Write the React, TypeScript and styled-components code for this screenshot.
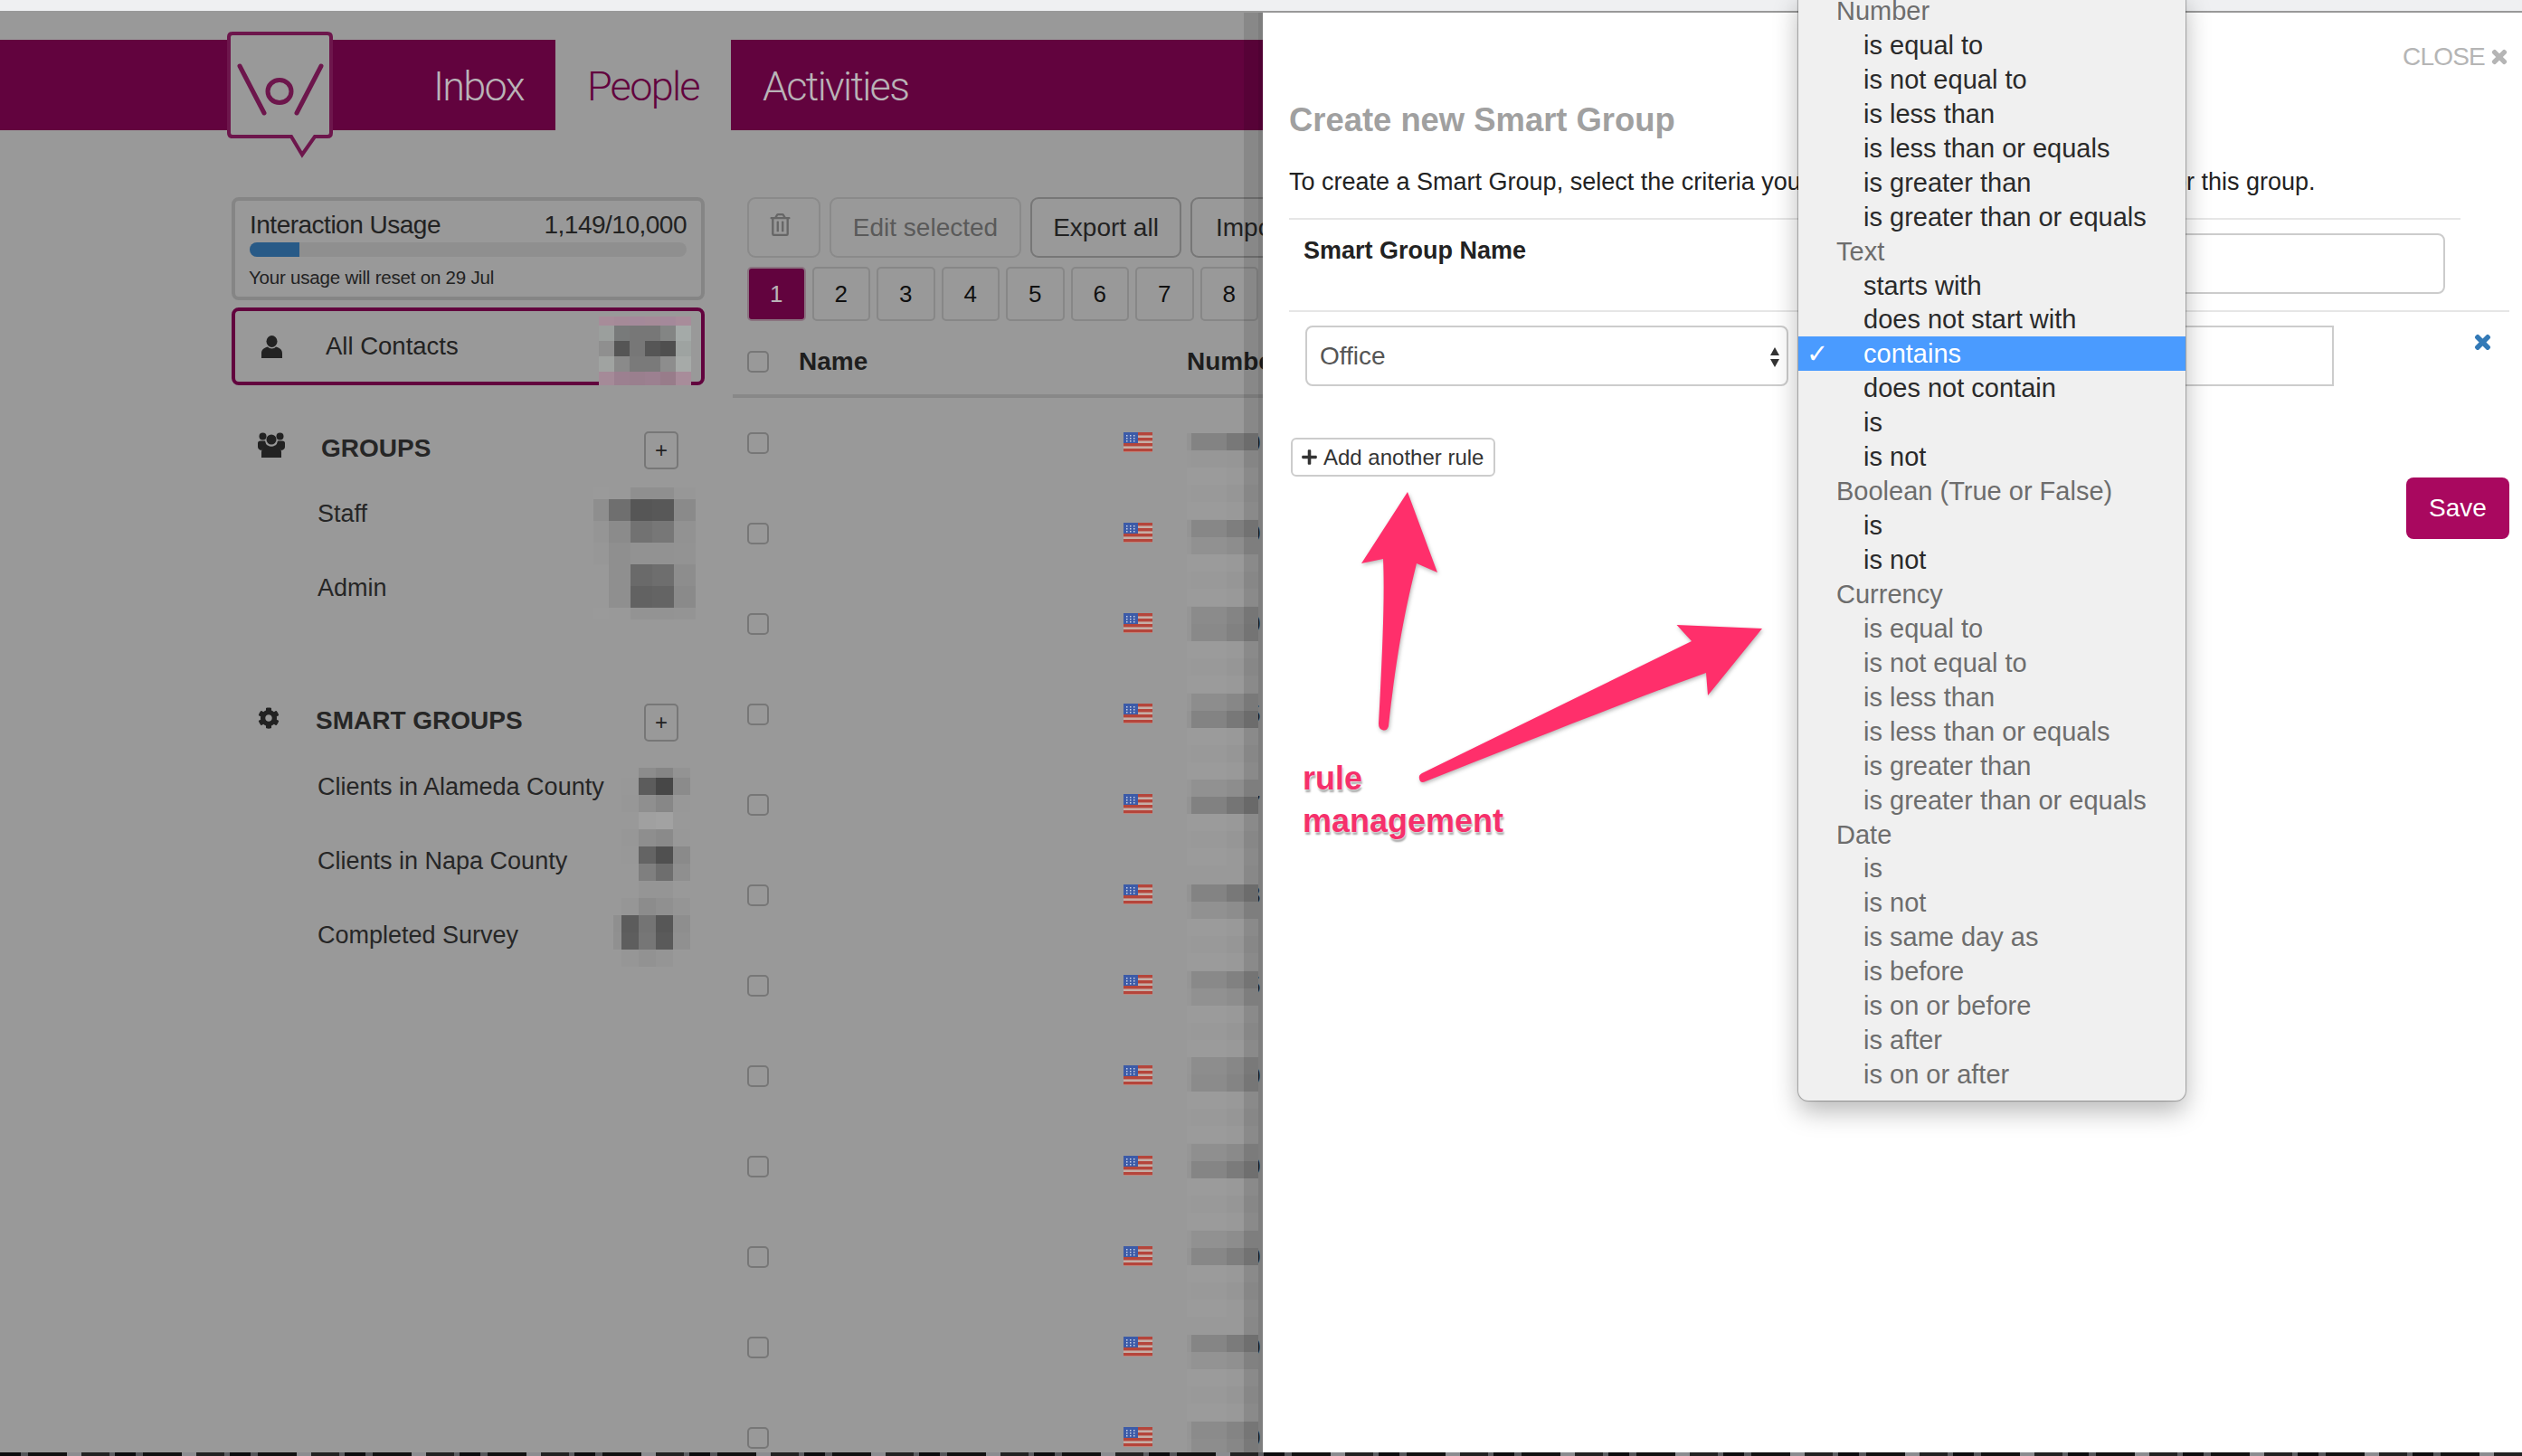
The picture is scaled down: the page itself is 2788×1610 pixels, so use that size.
import React from 'react';
import styled, { createGlobalStyle } from 'styled-components';
import { FaCog, FaPlus, FaRegTrashAlt, FaTimes } from 'react-icons/fa';

const PURPLE = '#62033e';
const GREY = '#999999';

const GlobalStyle = createGlobalStyle`
  html, body {
    margin: 0;
    width: 2788px;
    height: 1610px;
    overflow: hidden;
    background: ${GREY};
    font-family: "Liberation Sans", Arial, sans-serif;
    font-size: 28px;
    color: #222;
  }
  * { box-sizing: border-box; }
`;

const Page = styled.div`
  position: relative;
  display: flex;
  flex-direction: column;
  width: 2788px;
  height: 1610px;
  overflow: hidden;
`;

const TopStrip = styled.div`
  flex: 0 0 12px;
  background: #eff0f2;
`;

const Stage = styled.div`
  position: relative;
  flex: 1;
  min-height: 0;
`;

const BottomStrip = styled.div`
  position: relative;
  flex: 0 0 4px;
  background: repeating-linear-gradient(
    90deg,
    #0c0c0e 0 23px,
    #55565a 23px 31px,
    #111 31px 74px,
    #8b8c90 74px 90px,
    #222 90px 121px,
    #5d5e62 121px 127px
  );
`;

const Behind = styled.div`
  height: 100%;
  overflow: hidden;
  padding-top: 32px;
`;

const Nav = styled.nav`
  display: flex;
  height: 100px;
  padding-left: 444px;
  background: ${PURPLE};
`;

const NavTab = styled.div<{ $active?: boolean; $grow?: boolean }>`
  display: flex;
  align-items: center;
  flex: ${p => (p.$grow ? 1 : '0 0 auto')};
  padding: 2px 35px 0;
  font-family: Roboto, "Liberation Sans", sans-serif;
  font-size: 45px;
  font-weight: 300;
  letter-spacing: -1.7px;
  color: ${p => (p.$active ? PURPLE : '#b9b3b7')};
  background: ${p => (p.$active ? GREY : 'transparent')};
`;

const LogoMark = styled.svg`
  position: absolute;
  left: 250px;
  top: 23px;
`;

const Body = styled.div`
  display: flex;
  gap: 31px;
  padding-left: 256px;
  margin-top: 74px;
`;

const Sidebar = styled.aside`
  flex: 0 0 523px;
`;

const UsageCard = styled.div`
  height: 114px;
  padding: 10px 16px 0;
  border: 4px solid #858585;
  border-radius: 8px;
`;

const UsageHead = styled.div`
  display: flex;
  justify-content: space-between;
  font-size: 28px;
  line-height: 34px;
  letter-spacing: -0.5px;
`;

const UsageTrack = styled.div`
  height: 16px;
  margin-top: 2px;
  border-radius: 8px;
  background: #8f8f8f;
  overflow: hidden;
`;

const UsageFill = styled.div`
  height: 100%;
  background: #285a87;
`;

const UsageNote = styled.div`
  margin: 10px 0 0 -1px;
  font-size: 20.5px;
  line-height: 26px;
  letter-spacing: -0.2px;
`;

const ContactsCard = styled.div`
  position: relative;
  display: flex;
  align-items: center;
  height: 86px;
  margin-top: 8px;
  padding-left: 29px;
  border: 4px solid ${PURPLE};
  border-radius: 8px;
  font-size: 27.5px;
`;

const ContactsLabel = styled.span`
  margin-left: 48px;
`;

const Section = styled.section<{ $top: number }>`
  margin-top: ${p => p.$top}px;
`;

const SectionHead = styled.div<{ $titleGap: number }>`
  display: flex;
  align-items: center;
  height: 42px;
  padding: 0 29px;
  margin-bottom: ${p => p.$titleGap}px;
`;

const SectionTitle = styled.h2<{ $left: number }>`
  flex: 1;
  margin: 0 0 4px ${p => p.$left}px;
  font-size: 28px;
  font-weight: 700;
  color: #262626;
`;

const GroupsIcon = styled.svg`
  align-self: flex-start;
  margin-top: 1px;
`;

const GearIcon = styled(FaCog)`
  align-self: flex-start;
  margin-top: 4px;
`;

const AddSquare = styled.button`
  display: flex;
  align-items: center;
  justify-content: center;
  width: 38px;
  height: 42px;
  padding: 0;
  border: 2px solid #777;
  border-radius: 5px;
  background: transparent;
  font-family: "Liberation Sans", sans-serif;
  font-size: 24px;
  color: #222;
`;

const GroupList = styled.ul`
  position: relative;
  margin: 0;
  padding: 0 0 0 95px;
  list-style: none;
`;

const GroupRow = styled.li`
  display: flex;
  align-items: center;
  height: 82px;
  font-size: 27px;
  color: #262626;
`;

const MosaicGrid = styled.div<{ $cols: string; $rows: string; $right?: number; $left?: number; $top: number }>`
  position: absolute;
  display: grid;
  grid-template-columns: ${p => p.$cols};
  grid-template-rows: ${p => p.$rows};
  top: ${p => p.$top}px;
  ${p => (p.$right !== undefined ? `right: ${p.$right}px;` : '')}
  ${p => (p.$left !== undefined ? `left: ${p.$left}px;` : '')}
`;

const Mosaic = ({ cells, ...rest }: { cells: string[][]; $cols: string; $rows: string; $right?: number; $left?: number; $top: number }) => (
  <MosaicGrid {...rest}>
    {cells.flat().map((c, i) => (
      <div key={i} style={{ background: c }} />
    ))}
  </MosaicGrid>
);

const Main = styled.main`
  flex: 1;
`;

const Toolbar = styled.div`
  display: flex;
  gap: 10px;
  height: 67px;
  padding-left: 16px;
`;

const ToolButton = styled.button<{ $muted?: boolean; $width: number }>`
  flex: 0 0 ${p => p.$width}px;
  padding: 0;
  border: 2px solid ${p => (p.$muted ? '#8a8a8a' : '#777')};
  border-radius: 9px;
  background: transparent;
  font-family: "Liberation Sans", sans-serif;
  font-size: 28px;
  color: ${p => (p.$muted ? '#5a5a5a' : '#222')};
  white-space: nowrap;
  overflow: hidden;
`;

const TrashButton = styled(ToolButton)`
  padding-right: 8px;
`;

const ClippedButton = styled(ToolButton)`
  padding-left: 26px;
  text-align: left;
`;

const Pager = styled.div`
  display: flex;
  gap: 7px;
  height: 60px;
  margin-top: 10px;
  padding-left: 16px;
`;

const PageCell = styled.div<{ $active?: boolean }>`
  flex: 0 0 64.5px;
  display: flex;
  align-items: center;
  justify-content: center;
  border: 2px solid ${p => (p.$active ? '#8a7480' : '#878787')};
  border-radius: 5px;
  background: ${p => (p.$active ? PURPLE : 'transparent')};
  color: ${p => (p.$active ? '#b9b3b7' : '#111')};
  font-size: 26px;
`;

const HeadRow = styled.div`
  display: flex;
  align-items: center;
  height: 85px;
  padding: 9px 0 0 16px;
  border-bottom: 4px solid #888;
  font-weight: 700;
  font-size: 28px;
  color: #1e1e1e;
  white-space: nowrap;
`;

const Check = styled.span`
  flex: 0 0 24px;
  height: 24px;
  border: 2px solid #777;
  border-radius: 5px;
`;

const NameHead = styled.span`
  flex: 0 0 429px;
  margin-left: 33px;
`;

const TableRow = styled.div`
  position: relative;
  display: flex;
  align-items: flex-start;
  height: 100px;
  padding: 38px 0 0 16px;
`;

const FlagIcon = styled.svg`
  flex: 0 0 32px;
  margin-left: 392px;
`;

const NumberText = styled.span`
  margin-left: 104px;
  font-size: 28px;
  line-height: 24px;
  color: #1d1d1d;
`;

const Panel = styled.div`
  position: absolute;
  left: 1396px;
  top: 2px;
  right: 0;
  bottom: 0;
  padding: 97px 14px 0 29px;
  background: #fff;
  box-shadow: -5px 0 0 rgba(0, 0, 0, 0.07), -21px 0 0 rgba(0, 0, 0, 0.11);
`;

const CloseLink = styled.div`
  position: absolute;
  top: 33px;
  right: 14px;
  display: flex;
  align-items: center;
  gap: 5px;
  font-size: 28px;
  line-height: 32px;
  letter-spacing: -0.8px;
  color: #b5b5b5;
`;

const ChunkyX = styled(FaTimes)`
  stroke: currentColor;
  stroke-width: 30px;
`;

const Title = styled.h1`
  margin: 0;
  font-size: 36.4px;
  line-height: 44px;
  font-weight: 700;
  color: #a0a0a0;
`;

const Intro = styled.p`
  margin: 26px 0 0;
  font-size: 27px;
  line-height: 40px;
  color: #222;
  white-space: nowrap;
`;

const NameRow = styled.div`
  display: flex;
  align-items: flex-start;
  justify-content: space-between;
  height: 102px;
  margin: 20px 54px 0 0;
  padding: 15px 17px 0 16px;
  border-top: 2px solid #e6e6e6;
`;

const FieldLabel = styled.label`
  font-size: 27px;
  line-height: 38px;
  font-weight: 700;
  color: #222;
`;

const NameInput = styled.div`
  width: 710px;
  height: 67px;
  border: 2px solid #ccc;
  border-radius: 8px;
`;

const RuleRow = styled.div`
  display: flex;
  align-items: flex-start;
  height: 84px;
  padding: 15px 0 0 18px;
  border-top: 2px solid #e6e6e6;
`;

const SelectBox = styled.div`
  position: relative;
  display: flex;
  align-items: center;
  flex: 0 0 534px;
  height: 67px;
  padding-left: 14px;
  border: 2px solid #ccc;
  border-radius: 8px;
  font-size: 28px;
  color: #555;
`;

const SelectArrows = styled.svg`
  position: absolute;
  right: 7px;
  top: 20px;
`;

const ValueInput = styled.div`
  flex: 0 0 578px;
  height: 67px;
  margin-left: 25px;
  border: 2px solid #ccc;
`;

const RemoveRule = styled.span`
  margin: 7px 0 0 auto;
  padding-right: 18px;
  font-size: 23px;
  line-height: 30px;
  color: #337ab7;
`;

const Footer = styled.div`
  display: flex;
  justify-content: space-between;
  align-items: flex-start;
  margin-top: 57px;
  padding-left: 2px;
`;

const AddRule = styled.button`
  display: flex;
  align-items: center;
  gap: 6px;
  width: 226px;
  height: 43px;
  padding: 0 0 0 9px;
  border: 2px solid #ccc;
  border-radius: 6px;
  background: #fff;
  font-family: "Liberation Sans", sans-serif;
  font-size: 24px;
  color: #333;
  white-space: nowrap;
`;

const SaveButton = styled.button`
  width: 114px;
  height: 68px;
  margin-top: 44px;
  border: 0;
  border-radius: 8px;
  background: #a9085f;
  font-family: "Liberation Sans", sans-serif;
  font-size: 28px;
  font-weight: 500;
  color: #fff;
`;

const Menu = styled.ul`
  position: absolute;
  left: 1988px;
  top: -7px;
  width: 428px;
  margin: 0;
  padding: 0 0 10px;
  list-style: none;
  background: #f0f0f0;
  border-radius: 0 0 11px 11px;
  box-shadow: 0 0 1px 1px rgba(0, 0, 0, 0.28), 0 12px 28px rgba(0, 0, 0, 0.28);
`;

const MenuItem = styled.li<{ $kind: 'label' | 'item' | 'muted' | 'selected' }>`
  position: relative;
  height: 37.95px;
  padding-left: ${p => (p.$kind === 'label' ? 42 : 72)}px;
  font-size: 29px;
  line-height: 39px;
  white-space: nowrap;
  color: ${p => (p.$kind === 'selected' ? '#fff' : p.$kind === 'item' ? '#2a2a2a' : '#6d6d6d')};
  background: ${p => (p.$kind === 'selected' ? '#4a9bff' : 'transparent')};
`;

const Tick = styled.span`
  position: absolute;
  left: 9px;
  top: 0;
  font-family: "DejaVu Sans", sans-serif;
  font-size: 29px;
  font-weight: 700;
`;

const Arrows = styled.svg`
  position: absolute;
  left: 1490px;
  top: 530px;
  filter: drop-shadow(1px 2px 2px rgba(0, 0, 0, 0.28));
`;

const Callout = styled.div`
  position: absolute;
  left: 1440px;
  top: 837px;
  font-size: 36px;
  line-height: 47px;
  font-weight: 700;
  color: #f5306b;
  text-shadow: 0 0 2px #fff, 0 0 2px #fff, 1px 3px 2px rgba(0, 0, 0, 0.35);
`;

const UserGlyph = () => (
  <svg width="23" height="25" viewBox="0 0 23 25" fill="#222">
    <ellipse cx="11.5" cy="6.5" rx="6" ry="6.5" />
    <path d="M7 12.5 C2 14 0 16 0 20 V25 H23 V20 C23 16 21 14 16 12.5 C14 15 9 15 7 12.5 Z" />
  </svg>
);

const GroupsGlyph = () => (
  <GroupsIcon width="30" height="28" viewBox="0 0 30 28" fill="#222">
    <circle cx="5.5" cy="4.5" r="4" />
    <circle cx="24.5" cy="4.5" r="4" />
    <circle cx="15" cy="8" r="5.5" />
    <path d="M0 12 Q0 9.5 3 9.5 H8 Q8.5 13 11 15 Q6 16 4 20 Q0 19 0 16 Z" />
    <path d="M30 12 Q30 9.5 27 9.5 H22 Q21.5 13 19 15 Q24 16 26 20 Q30 19 30 16 Z" />
    <path d="M4 28 V22 Q4 15 11 14.5 Q15 17 19 14.5 Q26 15 26 22 V28 Z" />
  </GroupsIcon>
);

const Flag = () => (
  <FlagIcon width="32" height="22" viewBox="0 0 32 22">
    <rect width="32" height="22" fill="#c6aea6" />
    {[0, 6, 12, 18].map(y => (
      <rect key={y} y={y} width="32" height="3.4" fill="#b5453b" />
    ))}
    <rect width="16" height="12" fill="#3c5ba8" />
    {[3, 7, 11].map(x =>
      [3, 6, 9].map(y => <rect key={`${x}${y}`} x={x} y={y} width="1.5" height="1.5" fill="#c7cfe4" />),
    )}
  </FlagIcon>
);

const grey = (v: number) => `rgb(${v},${v},${v})`;

const CONTACT_CELLS = [
  ['#a78c99', '#a58a98', '#a4899a', '#a58a98', '#a4899a', '#a88c9a'],
  ['#9b9f9d', '#787a7a', '#777', '#777', '#838584', '#a4aaa8'],
  ['#8f8f8f', '#555', '#777', '#565656', '#4f4f4f', '#9ea3a1'],
  ['#a0a3a1', '#8a8a8a', '#7a7a7a', '#7a7a7a', '#8d8d8d', '#a6aaa8'],
  ['#a58a98', '#9c8090', '#9a7f8e', '#9c8090', '#987c8a', '#a88c9a'],
];

const GROUP_CELLS = [
  ['#9a9a9a', '#999', '#8f8f8f', '#8f8f8f', '#979797'],
  ['#8e8e8e', '#6f6f6f', '#565656', '#585858', '#8a8a8a'],
  ['#959595', '#8b8b8b', '#727272', '#777', '#929292'],
  ['#979797', '#8f8f8f', '#929292', '#929292', '#939393'],
  ['#999', '#8f8f8f', '#6a6a6a', '#6e6e6e', '#8d8d8d'],
  ['#999', '#8f8f8f', '#626262', '#646464', '#8a8a8a'],
  ['#9a9a9a', '#999', '#939393', '#939393', '#949494'],
];

const SMART_CELLS = [
  ['#999', '#999', '#8c8c8c', '#858585', '#939393'],
  ['#999', '#989898', '#5c5c5c', '#474747', '#8b8b8b'],
  ['#999', '#979797', '#8f8f8f', '#878787', '#989898'],
  ['#999', '#999', '#a0a0a0', '#a2a2a2', '#999'],
  ['#999', '#979797', '#8e8e8e', '#8a8a8a', '#989898'],
  ['#999', '#989898', '#646464', '#505050', '#8a8a8a'],
  ['#999', '#999', '#7f7f7f', '#6e6e6e', '#8f8f8f'],
  ['#999', '#999', '#959595', '#959595', '#999'],
  ['#999', '#969696', '#8c8c8c', '#909090', '#959595'],
  ['#8f8f8f', '#5c5c5c', '#747474', '#575757', '#8e8e8e'],
  ['#909090', '#5e5e5e', '#767676', '#5a5a5a', '#909090'],
  ['#999', '#969696', '#929292', '#959595', '#999'],
];

// [mosaic top relative to the row, darkness of first band, darkness of second band, hidden last digit]
const NUMBER_ROWS: [number, number, number, string][] = [
  [39, 22, 2, '0'],
  [35, 18, 8, '0'],
  [31, 14, 16, '0'],
  [27, 12, 22, '5'],
  [22, 8, 24, '7'],
  [38, 22, 8, '3'],
  [34, 16, 8, '5'],
  [29, 12, 14, '0'],
  [25, 10, 20, '0'],
  [21, 8, 18, '0'],
  [36, 20, 6, '0'],
  [32, 14, 12, '0'],
];

const numberCells = (a: number, b: number) =>
  [a, b, 0, 2, 0].map((s, i) => {
    const base = 153 + (i > 1 ? 2 : 0);
    return [
      grey(base - Math.round(s * 0.25)),
      grey(base - s),
      grey(base - s),
      grey(base - Math.round(s * 1.5) - (i > 1 ? 2 : 0)),
      grey(base - Math.round(s * 1.4)),
    ];
  });

const MENU: { text: string; kind: 'label' | 'item' | 'muted' | 'selected' }[] = [
  { text: 'Number', kind: 'label' },
  ...['is equal to', 'is not equal to', 'is less than', 'is less than or equals', 'is greater than', 'is greater than or equals'].map(
    text => ({ text, kind: 'item' as const }),
  ),
  { text: 'Text', kind: 'label' },
  { text: 'starts with', kind: 'item' },
  { text: 'does not start with', kind: 'item' },
  { text: 'contains', kind: 'selected' },
  { text: 'does not contain', kind: 'item' },
  { text: 'is', kind: 'item' },
  { text: 'is not', kind: 'item' },
  { text: 'Boolean (True or False)', kind: 'label' },
  { text: 'is', kind: 'item' },
  { text: 'is not', kind: 'item' },
  { text: 'Currency', kind: 'label' },
  ...['is equal to', 'is not equal to', 'is less than', 'is less than or equals', 'is greater than', 'is greater than or equals'].map(
    text => ({ text, kind: 'muted' as const }),
  ),
  { text: 'Date', kind: 'label' },
  ...['is', 'is not', 'is same day as', 'is before', 'is on or before', 'is after', 'is on or after'].map(text => ({
    text,
    kind: 'muted' as const,
  })),
];

export default function App() {
  return (
    <Page>
      <GlobalStyle />
      <TopStrip />
      <Stage>
        <Behind>
          <Nav>
            <NavTab>Inbox</NavTab>
            <NavTab $active>People</NavTab>
            <NavTab $grow>Activities</NavTab>
          </Nav>
          <LogoMark width="120" height="140" viewBox="0 0 120 140" fill="none" stroke="#6d164c">
            <path
              d="M7 2 H112 Q116 2 116 6 V112 Q116 116 112 116 H98 L84 136 L72 116 H7 Q3 116 3 112 V6 Q3 2 7 2 Z"
              strokeWidth="4"
              fill={GREY}
            />
            <path d="M15 38 L42 90 M105 38 L78 90" strokeWidth="5" strokeLinecap="round" />
            <ellipse cx="59" cy="66" rx="13" ry="12.5" strokeWidth="5" />
          </LogoMark>
          <Body>
            <Sidebar>
              <UsageCard>
                <UsageHead>
                  <span>Interaction Usage</span>
                  <span>1,149/10,000</span>
                </UsageHead>
                <UsageTrack>
                  <UsageFill style={{ width: `${(1149 / 10000) * 100}%` }} />
                </UsageTrack>
                <UsageNote>Your usage will reset on 29 Jul</UsageNote>
              </UsageCard>
              <ContactsCard>
                <UserGlyph />
                <ContactsLabel>All Contacts</ContactsLabel>
                <Mosaic cells={CONTACT_CELLS} $cols="repeat(6, 17px)" $rows="10px 17px 17px 17px 15px" $right={11} $top={6} />
              </ContactsCard>
              <Section $top={51}>
                <SectionHead $titleGap={8}>
                  <GroupsGlyph />
                  <SectionTitle $left={40}>GROUPS</SectionTitle>
                  <AddSquare>+</AddSquare>
                </SectionHead>
                <GroupList>
                  <GroupRow>Staff</GroupRow>
                  <GroupRow>Admin</GroupRow>
                  <Mosaic cells={GROUP_CELLS} $cols="17px repeat(4, 24px)" $rows="13px repeat(5, 24px) 13px" $right={10} $top={12} />
                </GroupList>
              </Section>
              <Section $top={87}>
                <SectionHead $titleGap={9}>
                  <GearIcon size={24} color="#222" />
                  <SectionTitle $left={40}>SMART GROUPS</SectionTitle>
                  <AddSquare>+</AddSquare>
                </SectionHead>
                <GroupList>
                  <GroupRow>Clients in Alameda County</GroupRow>
                  <GroupRow>Clients in Napa County</GroupRow>
                  <GroupRow>Completed Survey</GroupRow>
                  <Mosaic cells={SMART_CELLS} $cols="9px repeat(4, 19px)" $rows="11px repeat(11, 19px)" $right={16} $top={20} />
                </GroupList>
              </Section>
            </Sidebar>
            <Main>
              <Toolbar>
                <TrashButton $width={81} $muted>
                  <FaRegTrashAlt size={25} color="#666" />
                </TrashButton>
                <ToolButton $width={212} $muted>
                  Edit selected
                </ToolButton>
                <ToolButton $width={167}>Export all</ToolButton>
                <ClippedButton $width={200}>Import</ClippedButton>
              </Toolbar>
              <Pager>
                {[1, 2, 3, 4, 5, 6, 7, 8].map(n => (
                  <PageCell key={n} $active={n === 1}>
                    {n}
                  </PageCell>
                ))}
              </Pager>
              <HeadRow>
                <Check />
                <NameHead>Name</NameHead>
                <span>Number</span>
              </HeadRow>
              {NUMBER_ROWS.map(([top, a, b, digit], i) => (
                <TableRow key={i}>
                  <Check />
                  <Flag />
                  <NumberText>{digit}</NumberText>
                  <Mosaic cells={numberCells(a, b)} $cols="5px 19px 20px 19px 16px" $rows="repeat(5, 19px)" $left={502} $top={top} />
                </TableRow>
              ))}
            </Main>
          </Body>
        </Behind>
        <Panel>
          <CloseLink>
            CLOSE <ChunkyX size={22} />
          </CloseLink>
          <Title>Create new Smart Group</Title>
          <Intro>To create a Smart Group, select the criteria you want to use to add your contacts for this group.</Intro>
          <NameRow>
            <FieldLabel>Smart Group Name</FieldLabel>
            <NameInput />
          </NameRow>
          <RuleRow>
            <SelectBox>
              Office
              <SelectArrows width="12" height="26" viewBox="0 0 12 26" fill="#333">
                <path d="M6 2 L11 11 H1 Z M1 15 H11 L6 24 Z" />
              </SelectArrows>
            </SelectBox>
            <ValueInput />
            <RemoveRule>
              <ChunkyX />
            </RemoveRule>
          </RuleRow>
          <Footer>
            <AddRule>
              <FaPlus size={19} />
              Add another rule
            </AddRule>
            <SaveButton>Save</SaveButton>
          </Footer>
        </Panel>
      </Stage>
      <BottomStrip />
      <Arrows width="480" height="350" viewBox="1490 530 480 350" fill="#ff2f6b">
        <path d="M1556 544 L1589 633 L1566 623 C1557 660 1545 710 1535 803 Q1533 809 1528 807 Q1524 806 1524 800 C1528 727 1531 660 1529 618 L1505 623 Z" />
        <path d="M1948 695 L1888 769 L1886 744 C1800 775 1700 815 1576 864 Q1570 867 1569 861 Q1568 857 1572 855 L1870 709 L1853.5 691 Z" />
      </Arrows>
      <Callout>
        rule
        <br />
        management
      </Callout>
      <Menu>
        {MENU.map((m, i) => (
          <MenuItem key={i} $kind={m.kind}>
            {m.kind === 'selected' && <Tick>✓</Tick>}
            {m.text}
          </MenuItem>
        ))}
      </Menu>
    </Page>
  );
}
